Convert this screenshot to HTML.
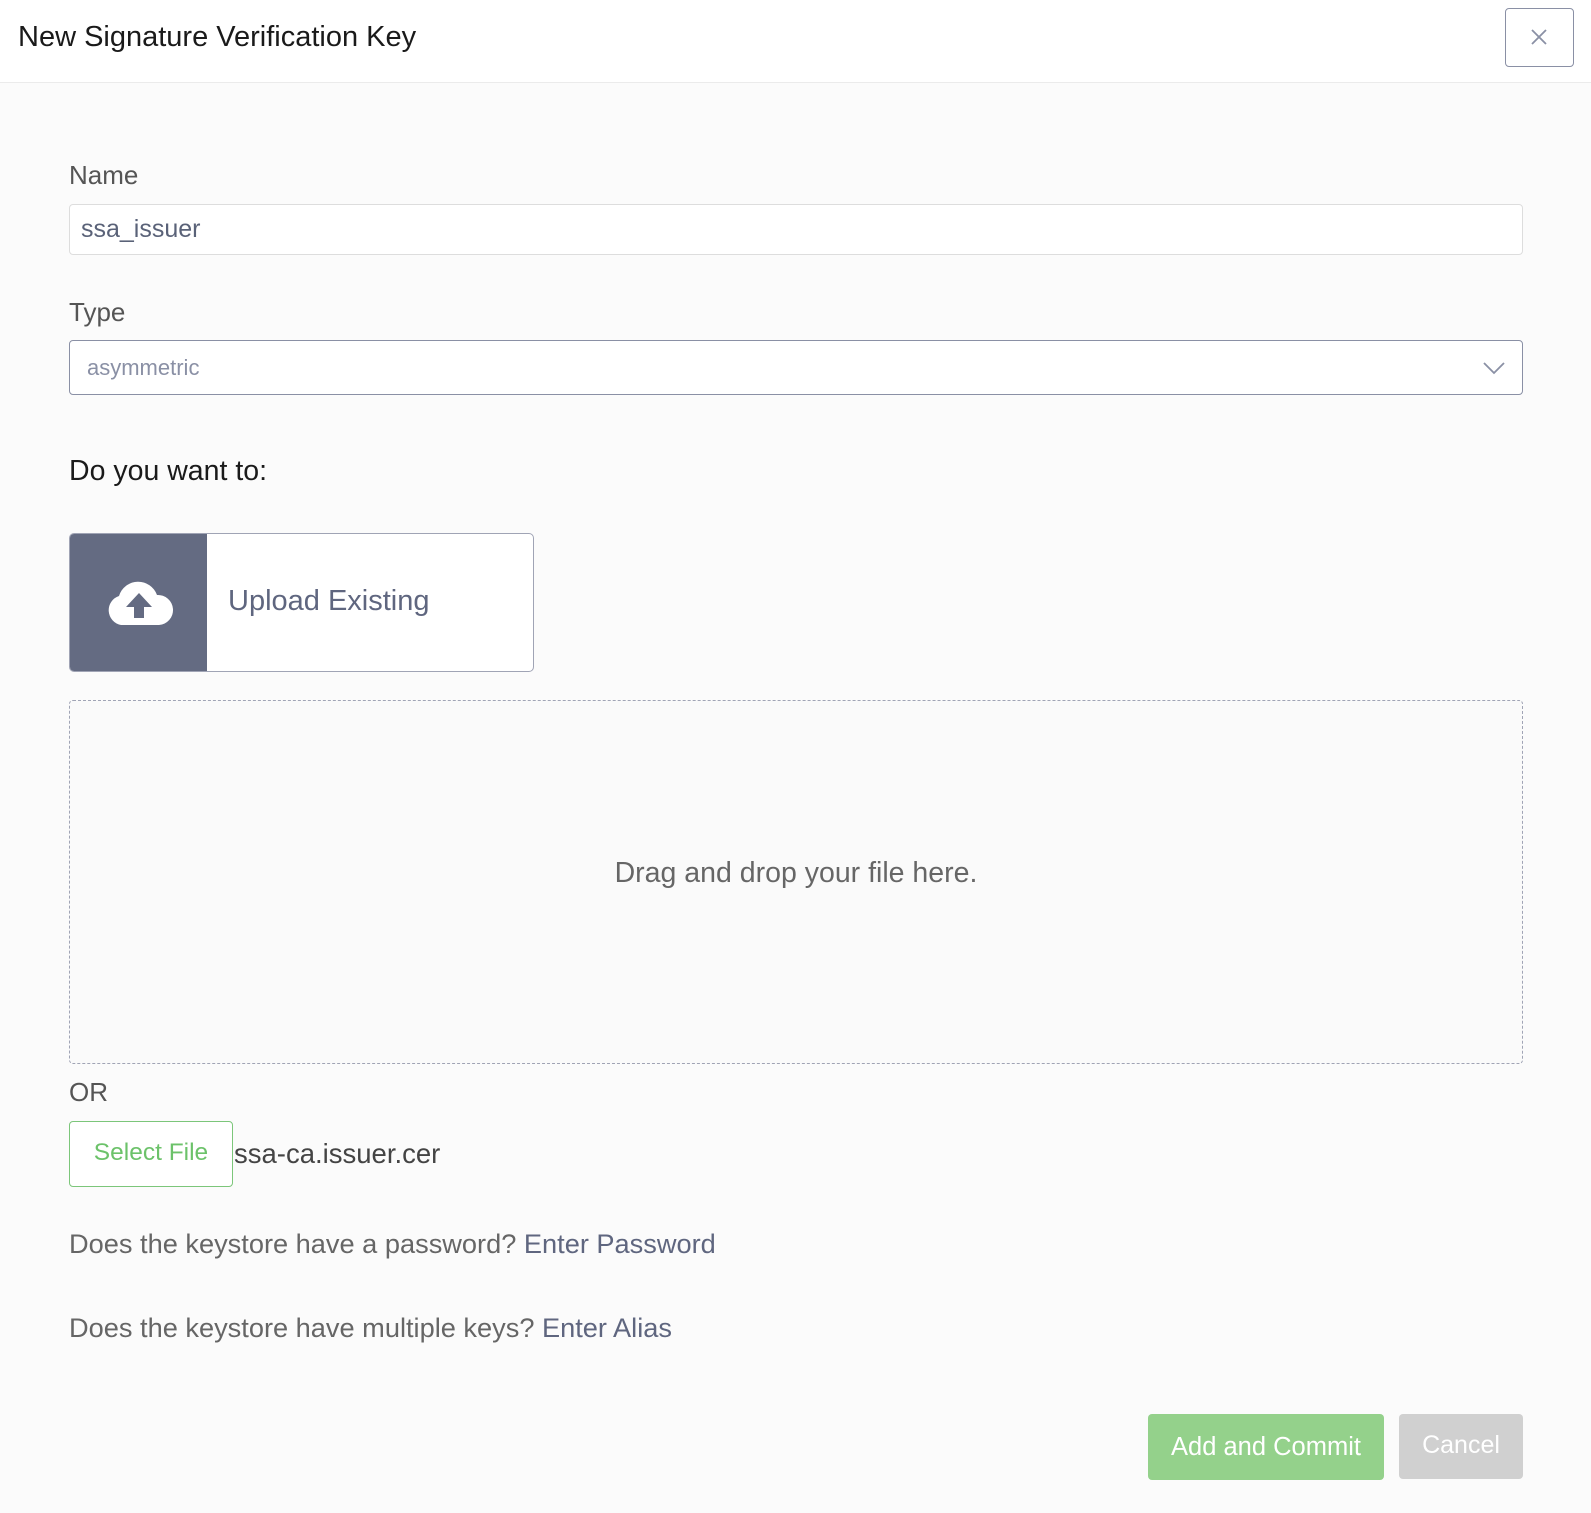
<!DOCTYPE html>
<html><head><meta charset="utf-8"><style>
*{box-sizing:border-box;margin:0;padding:0}
body{width:1591px;height:1513px;background:#fbfbfb;font-family:"Liberation Sans",sans-serif;position:relative;overflow:hidden}
.a{position:absolute;white-space:nowrap}
.hdr{position:absolute;left:0;top:0;width:1591px;height:83px;background:#fff;border-bottom:1px solid #ebebeb}
</style></head><body>
<div class="hdr"></div>
<div class="a" style="left:18px;top:21px;font-size:29px;color:#1a1a1a">New Signature Verification Key</div>
<div class="a" style="left:1505px;top:8px;width:69px;height:59px;border:1px solid #8a90a5;border-radius:4px;background:#fff">
<svg width="69" height="59" style="position:absolute;left:-1px;top:-1px"><path d="M27 22 L41 36 M41 22 L27 36" stroke="#8a90a5" stroke-width="1.8" fill="none"/></svg></div>

<div class="a" style="left:69px;top:160px;font-size:26px;color:#555">Name</div>
<div class="a" style="left:69px;top:204px;width:1454px;height:51px;border:1px solid #ddd;border-radius:4px;background:#fff"></div>
<div class="a" style="left:81px;top:215px;font-size:25px;color:#5a6278">ssa_issuer</div>

<div class="a" style="left:69px;top:297px;font-size:26px;color:#555">Type</div>
<div class="a" style="left:69px;top:340px;width:1454px;height:55px;border:1px solid #8a90a5;border-radius:4px;background:#fff">
<svg width="30" height="20" style="position:absolute;left:1411px;top:17px"><path d="M3 5 L13 15 L23 5" stroke="#8a90a5" stroke-width="1.8" fill="none"/></svg></div>
<div class="a" style="left:87px;top:355px;font-size:22px;color:#8a90a5">asymmetric</div>

<div class="a" style="left:69px;top:455px;font-size:28.5px;color:#1a1a1a">Do you want to:</div>

<div class="a" style="left:69px;top:533px;width:465px;height:139px;border:1px solid #a0a4b5;border-radius:5px;background:#fff;overflow:hidden">
<div style="position:absolute;left:0;top:0;width:137px;height:139px;background:#646b82"></div>
<svg width="72" height="50" style="position:absolute;left:33px;top:45px" viewBox="0 0 72 50">
<path d="M18 46 A15 15 0 0 1 16 17 A20 20 0 0 1 54 16 A15 15 0 0 1 56 46 Z" fill="#fff"/>
<path d="M36 14 L49 28 L41 28 L41 39 L31 39 L31 28 L23 28 Z" fill="#646b82"/></svg>
<div class="a" style="left:158px;top:51px;font-size:29px;color:#5f667f">Upload Existing</div>
</div>

<div class="a" style="left:69px;top:700px;width:1454px;height:364px;border:1px dashed #a0a4b5;border-radius:4px;background:#fafafa"></div>
<div class="a" style="left:69px;top:857px;width:1454px;text-align:center;font-size:28.5px;color:#666">Drag and drop your file here.</div>

<div class="a" style="left:69px;top:1077px;font-size:26px;color:#555">OR</div>
<div class="a" style="left:69px;top:1121px;width:164px;height:66px;border:1px solid #7cc67a;border-radius:4px;background:#fff"></div>
<div class="a" style="left:69px;top:1139px;width:164px;text-align:center;font-size:24.5px;color:#6cc26a">Select File</div>
<div class="a" style="left:234px;top:1138px;font-size:27.5px;color:#444">ssa-ca.issuer.cer</div>

<div class="a" style="left:69px;top:1228px;font-size:27.2px;color:#666">Does the keystore have a password? <span style="color:#5f667f">Enter Password</span></div>
<div class="a" style="left:69px;top:1312px;font-size:27.2px;color:#666">Does the keystore have multiple keys? <span style="color:#5f667f">Enter Alias</span></div>

<div class="a" style="left:1148px;top:1414px;width:236px;height:66px;background:#94d18b;border-radius:4px;color:#fff;font-size:25.5px;text-align:center;line-height:66px">Add and Commit</div>
<div class="a" style="left:1399px;top:1414px;width:124px;height:65px;background:#d0d0d0;border-radius:4px;color:#fff;font-size:25px;text-align:center;line-height:63px">Cancel</div>
</body></html>
